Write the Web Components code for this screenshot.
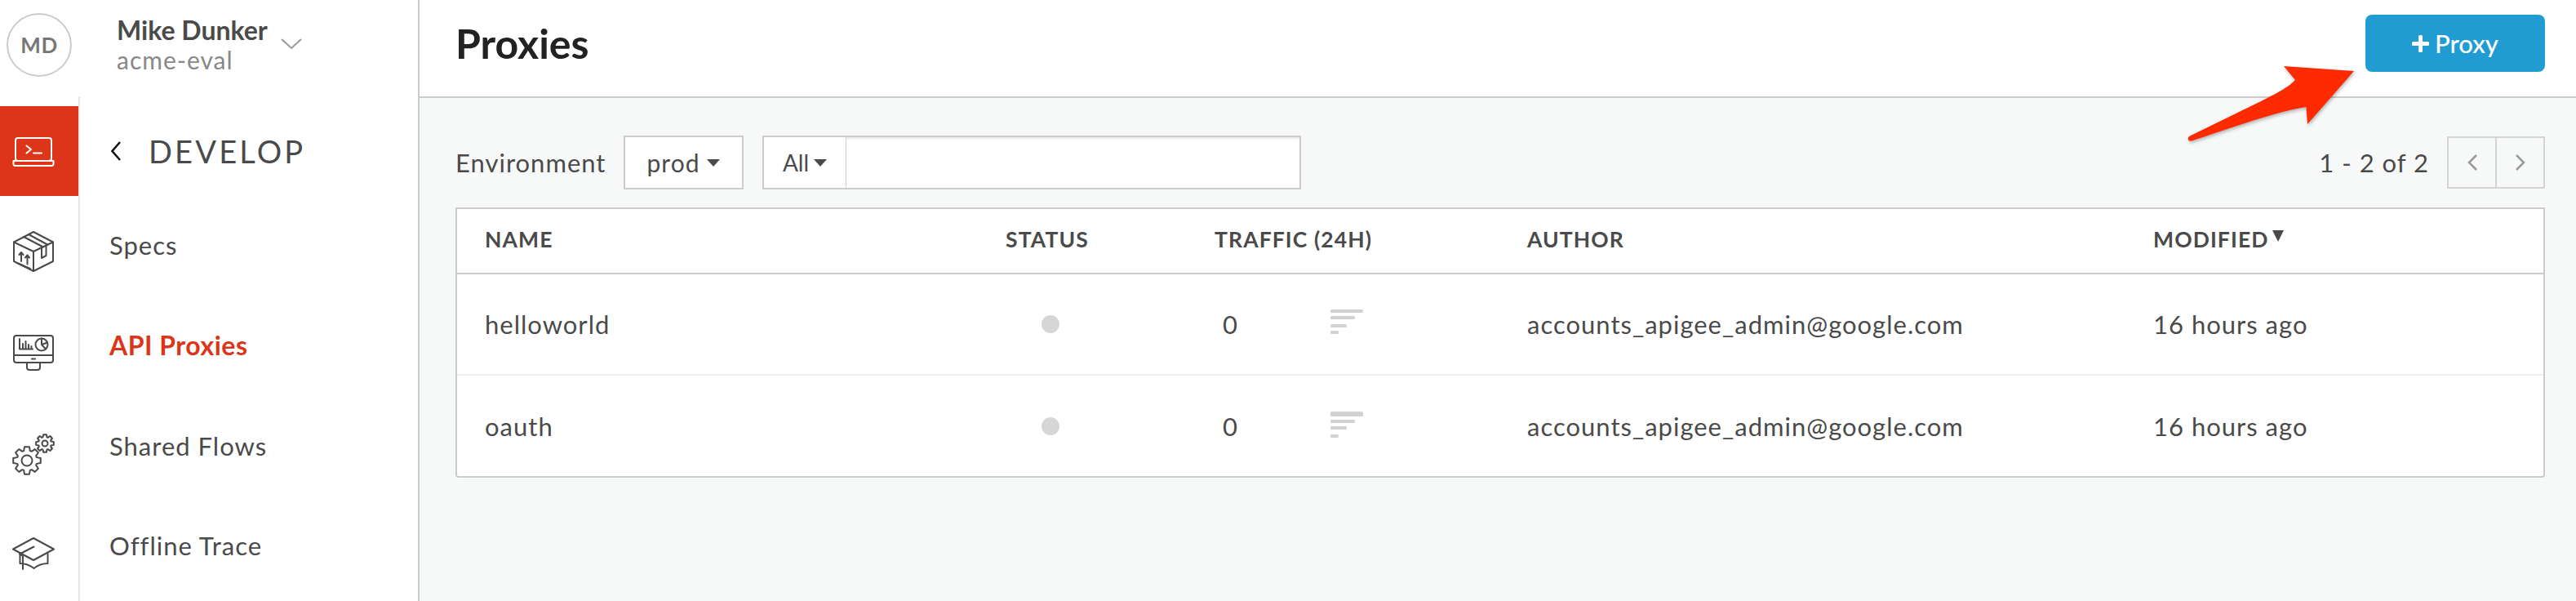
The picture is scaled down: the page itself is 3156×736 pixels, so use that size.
<!DOCTYPE html>
<html lang="en"><head><meta charset="utf-8"><title>Proxies</title>
<style>
html,body{margin:0;padding:0;height:736px;overflow:hidden;background:#fff}
body{font-family:Lato,"Open Sans",sans-serif;color:#4a4a4a;position:relative}
</style></head><body>
<app-shell>
  <side-bar slot="side"></side-bar>
  <page-header slot="head" title-text="Proxies"><action-button>Proxy</action-button></page-header>
  <tool-bar slot="tools"></tool-bar>
  <data-table slot="table">
    <table-row head name="NAME" status="STATUS" traffic="TRAFFIC (24H)" author="AUTHOR" modified="MODIFIED"></table-row>
    <table-row name="helloworld" traffic="0" author="accounts_apigee_admin@google.com" modified="16 hours ago" bars="0"></table-row>
    <table-row name="oauth" traffic="0" author="accounts_apigee_admin@google.com" modified="16 hours ago" bars="1" last></table-row>
  </data-table>
</app-shell>
<call-out></call-out>
<script>
function def(name, html, setup){
  customElements.define(name, class extends HTMLElement{
    connectedCallback(){
      if(this.shadowRoot) return;
      const r=this.attachShadow({mode:'open'});
      r.innerHTML = typeof html==='function'?html(this):html;
      if(setup) setup(this,r);
    }
  });
}
function gear(cx,cy,ro,ri,n){
  let d='';const st=Math.PI*2/n;
  for(let i=0;i<n;i++){
    const a=i*st-Math.PI/2;
    const p=[[a-st*.40,ri],[a-st*.22,ro],[a+st*.22,ro],[a+st*.40,ri]];
    p.forEach((q,k)=>{d+=((i===0&&k===0)?'M':'L')+(cx+q[1]*Math.cos(q[0])).toFixed(2)+' '+(cy+q[1]*Math.sin(q[0])).toFixed(2)});
  }
  return d+'Z';
}
const ICONS={
 develop:`<rect x="19" y="39" width="44" height="28" rx="3"/><path d="M16.5 67H65.5V70.5a2.5 2.5 0 0 1-2.5 2.5H19a2.5 2.5 0 0 1-2.5-2.5Z"/><path d="M32.500 48.500 38 53l-5.500 4.500M41 57.500H51"/>`,
 box:`<g transform="translate(0 24)"><path d="M41 7 65 19.500V43L41 55 17 43V19.500Z"/><path d="M17 19.500 41 31 65 19.500M41 31V55"/><path d="M29 13 53 25.500M35 10 58 22.500M51 26V39l5.500-3V23.500"/><path d="M22 45.500 37 52M26 43V32.500M23.500 35 26 32 28.500 35M33.500 46.500V35.500M31 38.500l2.500-3 2.500 3"/></g>`,
 monitor:`<rect x="17" y="35" width="48" height="33" rx="3"/><path d="M17 59H65M39 63.500H43M33 68V74a3 3 0 0 0 3 3H46a3 3 0 0 0 3-3V68"/><path d="M24 39V51.500H40M28 51V45M31.500 51V42M35 51V46M38.500 51V48"/><circle cx="51" cy="46" r="7.500"/><path d="M51 38.500V46L58 43.500M51 46 56 51.500"/>`,
 gears:`<path d="${gear(33,65,17,12.500,8)}"/><circle cx="33" cy="65" r="6.500"/><path d="${gear(55,44,11,8,8)}"/><circle cx="55" cy="44" r="3.500"/>`,
 cap:`<path d="M41 37 66 50.500 41 64 16 50.500Z"/><path d="M24.500 55V68c6 0 12 2 17 6 5-4 11-6 17-6V56"/><path d="M41.500 47.500 24 56.500 28 59V75"/>`
};
def('rail-item',h=>`<style>
:host{display:block;width:96px;height:110px}
:host([active]){background:#dc3519;color:#fff}
svg{display:block;width:96px;height:110px;fill:none;stroke:currentColor;stroke-width:2;stroke-linejoin:round;stroke-linecap:round}
</style><svg viewBox="0 0 96 110">${ICONS[h.getAttribute('icon')]}</svg>`);
def('nav-item',`<style>
:host{display:flex;align-items:center;height:122.67px;padding-left:36px;font-size:31px;letter-spacing:1px;color:#4a4a4a}
:host([active]){color:#dc3519;font-weight:700;font-size:32px;letter-spacing:.5px}
</style><slot></slot>`);
def('user-card',`<style>
:host{display:flex;align-items:center;height:118px;box-sizing:border-box;padding-left:8px;flex:none}
.av{width:80px;height:78px;box-sizing:border-box;border:2px solid #ccc;border-radius:50%;display:flex;align-items:center;justify-content:center;font-size:26px;font-weight:700;color:#777;letter-spacing:.5px;margin-top:-8px}
.t{margin-left:55px;display:flex;flex-direction:column;margin-top:-8px}
.n{font-size:32px;font-weight:700;line-height:37px;color:#4a4a4a}
.o{font-size:30px;line-height:37px;color:#888;letter-spacing:1px}
svg{width:26px;height:14px;margin-left:16px;margin-top:-10px;fill:none;stroke:#999;stroke-width:2}
</style><div class="av">MD</div><div class="t"><span class="n">Mike Dunker</span><span class="o">acme-eval</span></div>
<svg viewBox="0 0 26 14"><path d="M1 1 13 12 25 1"/></svg>`);
def('side-bar',`<style>
:host{display:flex;flex-direction:column;width:514px;height:736px;box-sizing:border-box;border-right:2px solid #ccc;flex:none;overflow:hidden}
.b{display:flex;flex:1;min-height:0}
.rail{width:98px;box-sizing:border-box;border-right:2px solid #e6e6e6;padding-top:12px;display:flex;flex-direction:column;gap:13px;flex:none}
.nav{flex:1}
.ti{height:121px;box-sizing:border-box;padding:12px 0 0 38px;display:flex;align-items:center;font-size:38px;letter-spacing:3.2px;color:#4a4a4a}
.ti svg{width:12px;height:24px;margin-right:34px;fill:none;stroke:#111;stroke-width:2.500}
</style><user-card></user-card><div class="b">
<div class="rail"><rail-item icon="develop" active></rail-item><rail-item icon="box"></rail-item><rail-item icon="monitor"></rail-item><rail-item icon="gears"></rail-item><rail-item icon="cap"></rail-item></div>
<div class="nav"><div class="ti"><svg viewBox="0 0 12 24"><path d="M11 1 1.500 12 11 23"/></svg>DEVELOP</div>
<nav-item>Specs</nav-item><nav-item active>API Proxies</nav-item><nav-item>Shared Flows</nav-item><nav-item>Offline Trace</nav-item></div></div>`);
def('action-button',`<style>
:host{display:flex;align-items:center;justify-content:center;gap:7px;width:220px;height:70px;background:#209cd2;border-radius:8px;color:#fff;font-size:31px;font-weight:500}
svg{width:21px;height:21px;fill:#fff}
</style><svg viewBox="0 0 21 21"><path d="M8 1.500a1.500 1.500 0 0 1 1.500-1.500h2a1.500 1.500 0 0 1 1.500 1.500V8h6.500a1.500 1.500 0 0 1 1.500 1.500v2a1.500 1.500 0 0 1-1.500 1.500H13v6.500a1.500 1.500 0 0 1-1.500 1.500h-2A1.500 1.500 0 0 1 8 19.500V13H1.500A1.500 1.500 0 0 1 0 11.500v-2A1.500 1.500 0 0 1 1.500 8H8Z"/></svg><slot></slot>`);
def('page-header',h=>`<style>
:host{display:flex;align-items:center;justify-content:space-between;height:120px;box-sizing:border-box;border-bottom:2px solid #ccc;padding:0 38px 12px 44px;background:#fff;flex:none}
h1{margin:0;font-size:50px;font-weight:700;color:#222}
</style><h1>${h.getAttribute('title-text')}</h1><slot></slot>`);
def('pager-nav',`<style>
:host{display:flex;height:64px;box-sizing:border-box;border:2px solid #d4d4d4}
div{width:57px;display:flex;align-items:center;justify-content:center}
div+div{border-left:2px solid #d4d4d4}
svg{width:12px;height:20px;fill:none;stroke:#999;stroke-width:2.500}
</style><div><svg viewBox="0 0 12 20"><path d="M11 1 2 10 11 19"/></svg></div><div><svg viewBox="0 0 12 20"><path d="M1 1 10 10 1 19"/></svg></div>`);
def('caret-mark',`<style>
:host{display:inline-block;width:0;height:0;border-left:8px solid transparent;border-right:8px solid transparent;border-top:9px solid #4a4a4a}
</style>`);
def('tool-bar',`<style>
:host{display:flex;align-items:center;height:66px;margin-top:46px;padding:0 38px 0 44px;font-size:31px;color:#4a4a4a;letter-spacing:1px;flex:none}
.l{width:206px}
.box{height:66px;box-sizing:border-box;border:2px solid #ccc;background:#fff;display:flex;align-items:center}
.env{width:147px;justify-content:center;gap:9px;font-size:30px;padding-right:0}
.srch{width:660px;margin-left:23px;box-shadow:inset 0 4px 4px -3px #ddd}
.all{width:101px;height:100%;box-sizing:border-box;border-right:1px solid #ccc;display:flex;align-items:center;justify-content:center;gap:6px;font-size:28px;letter-spacing:0;background:#fff}
.c{margin-left:auto;margin-right:22px}
</style><span class="l">Environment</span><div class="box env">prod<caret-mark></caret-mark></div><div class="box srch"><div class="all">All<caret-mark></caret-mark></div></div><span class="c">1 - 2 of 2</span><pager-nav></pager-nav>`);
def('table-row',h=>{
 const a=k=>h.getAttribute(k)||'';const head=h.hasAttribute('head');
 const bars=[`<rect y="0" width="40" height="4" rx="1.500"/><rect y="8" width="30" height="4" rx="1.500"/><rect y="18" width="20" height="4" rx="1.500"/><rect y="26" width="10" height="4" rx="1.500"/>`,
 `<rect y="0" width="40" height="6" rx="1.500"/><rect y="10" width="30" height="4" rx="1.500"/><rect y="18" width="20" height="4" rx="1.500"/><rect y="28" width="10" height="4" rx="1.500"/>`][+a('bars')];
 return `<style>
:host{display:grid;grid-template-columns:638px 256px 383px 767px 1fr;align-items:center;padding-left:34px;box-sizing:border-box;height:124px;border-bottom:2px solid #eee;font-size:31px;letter-spacing:1px;color:#4a4a4a}
:host([head]){height:80px;border-bottom:2px solid #ccc;font-size:26.5px;font-weight:700;letter-spacing:1.1px;padding-bottom:4px}
:host([last]){height:125px;border-bottom:0;padding-bottom:2px}
.d{width:22px;height:22px;border-radius:50%;background:#d6d6d6;margin-left:44px}
.t{display:flex;align-items:center}
.z{margin-left:10px;width:132px}
svg{width:40px;height:32px;fill:#d2d2d2;margin-top:-4px}
.m{display:inline-flex;align-items:flex-start;gap:4px}
.m caret-mark{border-left-width:7px;border-right-width:7px;border-top-width:14px;margin-top:5px}
</style><div>${a('name')}</div>`+(head?`<div>${a('status')}</div><div>${a('traffic')}</div><div>${a('author')}</div><div class="m">${a('modified')}<caret-mark></caret-mark></div>`:
 `<div><div class="d"></div></div><div class="t"><span class="z">${a('traffic')}</span><svg viewBox="0 0 40 32">${bars}</svg></div><div>${a('author')}</div><div>${a('modified')}</div>`)});
def('data-table',`<style>
:host{display:block;margin:22px 38px 0 44px;box-sizing:border-box;height:331px;background:#fff;border:2px solid #ccc;border-radius:0 0 4px 4px;flex:none}
</style><slot></slot>`);
def('app-shell',`<style>
:host{display:flex;width:3156px;height:736px}
.m{flex:1;display:flex;flex-direction:column;background:#f7f9f8;min-width:0}
</style><slot name="side"></slot><div class="m"><slot name="head"></slot><slot name="tools"></slot><slot name="table"></slot></div>`);
def('call-out',`<style>
:host{position:absolute;left:2670px;top:70px;width:220px;height:110px;display:block}
svg{width:220px;height:110px;overflow:visible;filter:drop-shadow(1px 2px 2px rgba(0,0,0,.3))}
</style><svg viewBox="2670 70 220 110"><path fill="#ff2a00" d="M2798 81 2884 87 2827 152 2825.500 131C2790 136 2730 158 2685 172.500C2680 173.500 2679.500 168.500 2683 166.500L2770 124C2790 114 2802 108 2812 98Z"/></svg>`);
</script>
</body></html>
